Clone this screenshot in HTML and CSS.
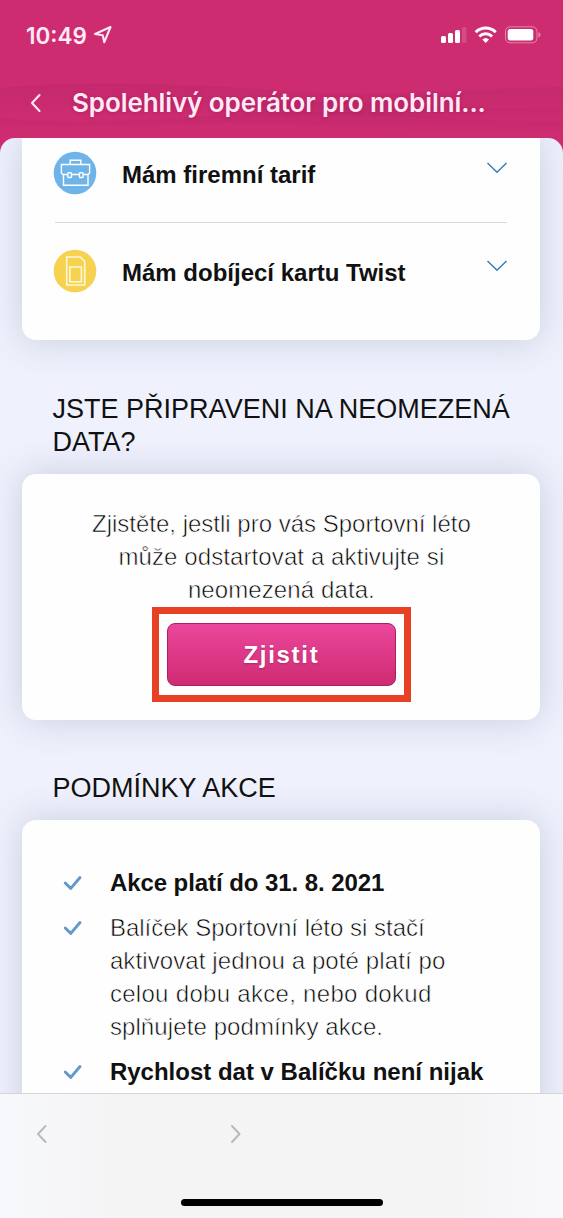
FILE: index.html
```html
<!DOCTYPE html>
<html lang="cs">
<head>
<meta charset="utf-8">
<title>Sportovní léto</title>
<link rel="stylesheet" href="styles.css">
</head>
<body>
<div class="screen">
  <header class="header">
    <svg class="waves" viewBox="0 0 563 160" preserveAspectRatio="none">
      <defs>
        <linearGradient id="w1" x1="0" y1="0" x2="0" y2="1"><stop offset="0" stop-color="#a81f5e" stop-opacity=".25"/><stop offset="1" stop-color="#a81f5e" stop-opacity=".03"/></linearGradient>
      </defs>
      <path d="M0 88C80 80 190 84 290 91S480 88 563 87V111C470 108 400 117 300 115S100 108 0 114Z" fill="url(#w1)"/>
      <path d="M0 118C110 127 200 114 300 112S460 122 563 121V134C450 136 360 126 260 124S100 130 0 125Z" fill="url(#w1)"/>
      <path d="M260 104C330 96 420 109 563 109V120C450 124 350 110 260 112Z" fill="url(#w1)"/>
    </svg>
    <div class="status">
      <span class="time">10:49</span>
      <svg class="location" width="20" height="20" viewBox="0 0 20 20"><path d="M2 9 17.500 2 11.300 17.200 9.700 10.200Z" fill="none" stroke="#ffe9f4" stroke-width="2.100" stroke-linejoin="round"/></svg>
      <svg class="indicators" width="102" height="20" viewBox="0 0 102 20">
        <g fill="#fff"><rect x="1" y="11" width="5" height="7" rx="1.5"/><rect x="8" y="8" width="5" height="10" rx="1.5"/><rect x="15" y="5" width="5" height="13" rx="1.5"/><rect x="22" y="2" width="4.500" height="16" rx="1.500" opacity=".15"/></g>
        <g fill="none" stroke="#fff" stroke-width="3"><path d="M35.700 7.300a14 14 0 0 1 20 0"/><path d="M39.300 11.400a9 9 0 0 1 12.800 0" stroke-width="2.800"/></g>
        <path d="M42.400 14.400a4.900 4.900 0 0 1 6.600 0L45.700 18Z" fill="#fff"/>
        <rect x="65.500" y="1.800" width="31.500" height="16" rx="4.500" fill="none" stroke="#fff" stroke-opacity=".42"/>
        <rect x="67.700" y="4" width="25.600" height="11.600" rx="2.500" fill="#fff"/>
        <path d="M98.500 7.300c2.500 1 2.500 4.300 0 5.300Z" fill="#fff" opacity=".45"/>
      </svg>
    </div>
    <div class="titlebar">
      <svg class="back" width="12" height="20" viewBox="0 0 12 20"><path d="M9.500 2 2 10l7.500 8" fill="none" stroke="#ffe9f4" stroke-width="2.100" stroke-linecap="round" stroke-linejoin="round"/></svg>
      <h1 class="title">Spolehlivý operátor pro mobilní...</h1>
    </div>
  </header>

  <main class="content">
    <section class="card tariffs">
      <div class="row">
        <svg class="badge" width="44" height="44" viewBox="0 0 44 44"><circle cx="22" cy="22" r="21.300" fill="#6fb4e8"/><g fill="none" stroke="#fff" stroke-width="1.400"><path d="M17.200 13.500V9.300h10.600v4.200M14.700 23.500H10L8.400 22v-8.500h28.200V22L35 23.500h-4.700M18.500 23.500h7.800M10.500 23.500V34.300H35V23.500"/><rect x="14.800" y="21.700" width="3.700" height="4.800" rx=".8"/><rect x="26.400" y="21.700" width="3.700" height="4.800" rx=".8"/></g></svg>
        <span class="label">Mám firemní tarif</span>
        <svg class="chevron" width="22" height="14" viewBox="0 0 22 14"><path d="m1.500 2 9.500 9.300L20.500 2" fill="none" stroke="#3580b8" stroke-width="1.500"/></svg>
      </div>
      <div class="row">
        <svg class="badge" width="44" height="44" viewBox="0 0 44 44"><circle cx="22" cy="22" r="21.300" fill="#f6d250"/><g fill="none" stroke="#fff8d8" stroke-width="1.600"><path d="M13.700 8h13.600l4.400 4.500V36h-18Z"/><path d="M16.900 18h11.500v14.800H16.900Z"/></g></svg>
        <span class="label">Mám dobíjecí kartu Twist</span>
        <svg class="chevron" width="22" height="14" viewBox="0 0 22 14"><path d="m1.500 2 9.500 9.300L20.500 2" fill="none" stroke="#3580b8" stroke-width="1.500"/></svg>
      </div>
    </section>

    <h2 class="heading">JSTE PŘIPRAVENI NA NEOMEZENÁ<br>DATA?</h2>
    <section class="card check">
      <p class="light">Zjistěte, jestli pro vás Sportovní léto<br><span class="wide">může odstartovat a aktivujte si</span><br><span class="wide">neomezená data.</span></p>
      <div class="highlight"><button class="button">Zjistit</button></div>
    </section>

    <h2 class="heading terms-title">PODMÍNKY AKCE</h2>
    <section class="card terms">
      <ul class="list">
        <li class="item"><svg class="tick" width="20" height="16" viewBox="0 0 20 16"><path d="m2.200 8 5.600 5.400L17 2.500" fill="none" stroke="#6298cc" stroke-width="2.900" stroke-linecap="round" stroke-linejoin="round"/></svg><strong class="tight">Akce platí do 31. 8. 2021</strong></li>
        <li class="item"><svg class="tick" width="20" height="16" viewBox="0 0 20 16"><path d="m2.200 8 5.600 5.400L17 2.500" fill="none" stroke="#6298cc" stroke-width="2.900" stroke-linecap="round" stroke-linejoin="round"/></svg><span class="light">Balíček Sportovní léto si stačí<br><span class="wide">aktivovat jednou a poté platí po</span><br><span class="wider">celou dobu akce, nebo dokud</span><br><span class="wide">splňujete podmínky akce.</span></span></li>
        <li class="item"><svg class="tick" width="20" height="16" viewBox="0 0 20 16"><path d="m2.200 8 5.600 5.400L17 2.500" fill="none" stroke="#6298cc" stroke-width="2.900" stroke-linecap="round" stroke-linejoin="round"/></svg><strong>Rychlost dat v Balíčku není nijak</strong></li>
      </ul>
    </section>
  </main>

  <footer class="toolbar">
    <nav class="arrows">
      <svg width="12" height="20" viewBox="0 0 12 20"><path d="M9.500 2 2 10l7.500 8" fill="none" stroke="#b9b9bb" stroke-width="2" stroke-linecap="round" stroke-linejoin="round"/></svg>
      <svg width="12" height="20" viewBox="0 0 12 20"><path d="M2 2l7.500 8L2 18" fill="none" stroke="#b9b9bb" stroke-width="2" stroke-linecap="round" stroke-linejoin="round"/></svg>
    </nav>
    <div class="home"></div>
  </footer>
</div>
</body>
</html>
```
FILE: styles.css
```css
* { box-sizing: border-box; }
body { margin: 0; font-family: "Liberation Sans", Arial, sans-serif; color: #111; }
h1, h2, p, ul { margin: 0; padding: 0; font-weight: 400; }
.screen { width: 563px; height: 1218px; overflow: hidden; display: flex; flex-direction: column; background: #ce2c71; }
.header { position: relative; height: 138px; flex: none; color: #ffe9f4; font-family: Inter, sans-serif; }
.waves { position: absolute; left: 0; top: 0; width: 563px; height: 160px; }
.status { position: relative; display: flex; align-items: center; height: 70px; padding: 0 21px 0 26px; }
.time { font-size: 22.5px; font-weight: 600; width: 67px; letter-spacing: 0; }
.indicators { margin-left: auto; }
.titlebar { position: relative; display: flex; align-items: center; height: 65px; padding-left: 30px; }
.title { margin-left: 30px; font-size: 26px; font-weight: 600; letter-spacing: -.09px; white-space: nowrap; text-shadow: 0 1px 4px rgba(110, 10, 60, .3); }
.content { position: relative; height: 955px; flex: none; overflow: hidden; border-radius: 15px 15px 0 0; background: #eff2fd; }
.card { width: 518px; margin-left: 22.4px; border-radius: 14px; background: #fefefe; box-shadow: 0 0 36px rgba(72, 72, 105, .23); }
.tariffs { height: 202px; padding: 0 33px; border-radius: 0 0 14px 14px; }
.row { display: flex; align-items: flex-start; height: 85px; padding-top: 13px; }
.row:first-child { border-bottom: 1px solid #d9d9df; }
.row:last-child { padding-top: 26px; }
.badge { margin-left: -2px; }
.label { margin-left: 24.6px; font-weight: 700; font-size: 24px; line-height: 47px; white-space: nowrap; }
.chevron { margin: 10px -1px 0 auto; }
.heading { padding: 53px 0 14.5px 52.6px; font-size: 27px; line-height: 33px; white-space: nowrap; }
.check { height: 246px; padding-top: 33.5px; text-align: center; }
.light { font-size: 24px; line-height: 33px; color: #000; -webkit-text-stroke: .6px #fefefe; white-space: nowrap; }
.wide { letter-spacing: .1px; }
.wider { letter-spacing: .3px; }
.tight { letter-spacing: -.07px; }
.highlight { width: 259px; height: 95px; margin: 1px auto 0; border: 7px solid #e84025; display: flex; align-items: center; justify-content: center; }
.button { width: 229px; height: 63px; border: 1px solid #a82060; border-radius: 8px; background: linear-gradient(#ec479d, #ce2b72); color: #fff; font: 700 24px/1 "Liberation Sans", Arial, sans-serif; letter-spacing: 1.7px; text-shadow: 0 1px 2px rgba(90, 0, 50, .3); }
.terms-title { padding: 52px 0 15.5px 52.6px; }
.terms { height: 400px; padding: 46px 0 0 41px; }
.list { list-style: none; }
.item { display: flex; align-items: flex-start; margin-bottom: 12px; font-size: 24px; line-height: 33px; white-space: nowrap; }
.tick { margin: 9px 26.5px 0 0; }
.toolbar { flex: none; height: 125px; border-top: 1px solid #d4d4da; background: linear-gradient(90deg, #f8f9fc, #f4f4f5 20%, #f4f4f5 80%, #f9f9fc); display: flex; flex-direction: column; align-items: center; }
.arrows { width: 563px; padding: 30px 0 0 36px; display: flex; gap: 182px; }
.home { width: 202px; height: 7px; margin-top: 55px; border-radius: 4px; background: #000; }
```
